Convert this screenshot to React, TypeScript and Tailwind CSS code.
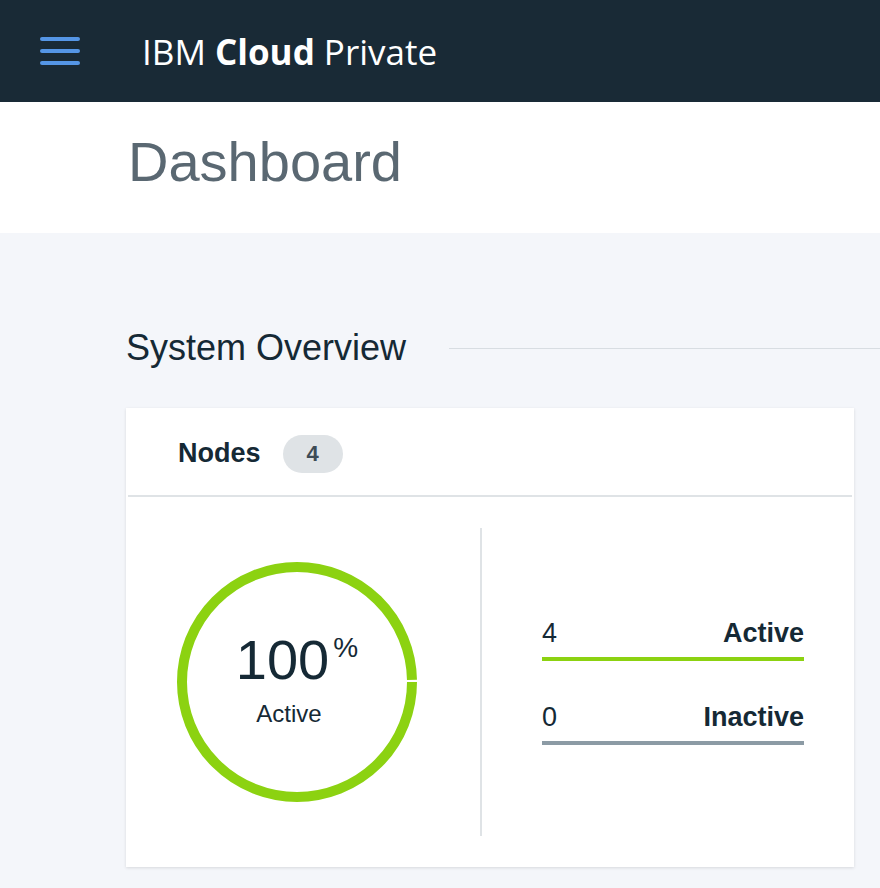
import React from 'react';

const helv = { fontFamily: '"Liberation Sans", Arial, sans-serif' };

const Ring: React.FC<{ percent: number }> = ({ percent }) => {
  const r = 115;
  const c = 2 * Math.PI * r;
  const len = (c - 3) * (percent / 100);
  return (
    <div className="relative w-[240px] h-[240px]">
      <svg width="240" height="240" viewBox="0 0 240 240" className="absolute inset-0">
        <circle
          cx="120"
          cy="120"
          r={r}
          fill="none"
          stroke="#8cd211"
          strokeWidth="10"
          strokeDasharray={`${len} ${c - len}`}
        />
      </svg>
      <div className="absolute inset-0 flex flex-col items-center justify-center pb-[6px] text-[#152935]">
        <div className="flex items-start">
          <span className="text-[56px] leading-none">{percent}</span>
          <span className="text-[28px] leading-none mt-[2px] ml-[4px]">%</span>
        </div>
        <span className="text-[24px] leading-none mt-[14px] mr-[16px]">Active</span>
      </div>
    </div>
  );
};

const StatRow: React.FC<{ value: number; label: string; bar: string; className?: string }> = ({
  value,
  label,
  bar,
  className,
}) => (
  <div className={className}>
    <div className="flex justify-between items-baseline text-[27px] leading-none text-[#152935]">
      <span>{value}</span>
      <span className="font-bold">{label}</span>
    </div>
    <div className={`h-1 mt-[10px] ${bar}`}></div>
  </div>
);

export default function App() {
  return (
    <div className="w-[880px] min-h-[888px] bg-[#f4f6fa]" style={helv}>
      {/* top bar */}
      <header className="h-[102px] bg-[#192a36] flex items-center">
        <div className="ml-[40px] flex flex-col gap-2">
          <span className="block w-[40px] h-1 rounded-full bg-[#5596e6]"></span>
          <span className="block w-[40px] h-1 rounded-full bg-[#5596e6]"></span>
          <span className="block w-[40px] h-1 rounded-full bg-[#5596e6]"></span>
        </div>
        <h1
          className="ml-[62px] text-[35px] text-white leading-none"
          style={{ fontFamily: '"Open Sans", "Noto Sans", sans-serif' }}
        >
          IBM <span className="font-bold">Cloud</span> Private
        </h1>
      </header>

      {/* page title */}
      <div className="h-[131px] bg-white pl-[128px] pt-[32px]">
        <h2 className="text-[56px] leading-none text-[#5a6872]">Dashboard</h2>
      </div>

      {/* overview */}
      <section className="pl-[126px] pt-[95px] pb-[20px]">
        <div className="flex items-center">
          <h3 className="text-[36px] leading-[40px] text-[#152935] whitespace-nowrap">System Overview</h3>
          <div className="flex-1 h-px bg-[#d8dde2] ml-[43px]"></div>
        </div>

        <div className="mt-[40px] w-[728px] bg-white shadow-[0_1px_3px_rgba(0,0,0,0.12)]">
          <div className="h-[87px] flex items-center pl-[52px] pt-1">
            <span className="text-[27px] font-bold text-[#152935]">Nodes</span>
            <span className="ml-[22px] w-[60px] h-[38px] rounded-full bg-[#dfe3e6] flex items-center justify-center text-[22px] font-bold text-[#3d4b55]">
              4
            </span>
          </div>
          <div className="mx-[2px] h-[2px] bg-[#dfe3e6]"></div>

          <div className="flex py-[31px]">
            <div className="w-[354px] flex items-center pl-[51px]">
              <Ring percent={100} />
            </div>
            <div className="w-[2px] h-[308px] bg-[#dfe3e6]"></div>
            <div className="flex-1 flex flex-col justify-center pl-[60px] pr-[50px]">
              <StatRow value={4} label="Active" bar="bg-[#8cd211]" />
              <StatRow value={0} label="Inactive" bar="bg-[#8c9ba5]" className="mt-[43px]" />
            </div>
          </div>
        </div>
      </section>
    </div>
  );
}
